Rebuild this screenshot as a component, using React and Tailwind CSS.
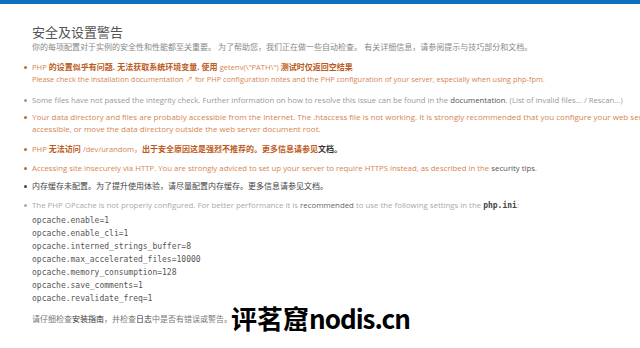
import React from "react";

const sans = { fontFamily: '"Open Sans", "Noto Sans CJK SC", sans-serif' };
const mono = { fontFamily: '"DejaVu Sans Mono", monospace' };

function Dot({ c }) {
  return <span className={`absolute left-[-8px] top-[5px] h-[3px] w-[3px] rounded-full ${c}`} />;
}

function L({ children }) {
  return <span className="text-[7.6px]">{children}</span>;
}

export default function App() {
  const code = [
    "opcache.enable=1",
    "opcache.enable_cli=1",
    "opcache.interned_strings_buffer=8",
    "opcache.max_accelerated_files=10000",
    "opcache.memory_consumption=128",
    "opcache.save_comments=1",
    "opcache.revalidate_freq=1",
  ];
  return (
    <div className="relative h-[348px] w-[640px] overflow-hidden bg-white" style={sans}>
      <div className="h-[4px] w-full bg-[#0b6fc0]" />
      <div className="flex">
        <div className="ml-[14px] mt-[4px] h-[340px] w-[3px] bg-[#e2e2e2]" />
        <div className="ml-[18px] w-[700px] shrink-0 pt-[20px] text-[8px] leading-[12px]">
          <h2 className="text-[13px] leading-[16px] text-[#555]">安全及设置警告</h2>
          <p className="mt-[1px] text-[#888]">
            你的每项配置对于实例的安全性和性能都至关重要。 为了帮助您，我们正在做一些自动检查。 有关详细信息，请参阅提示与技巧部分和文档。
          </p>
          <ul className="mt-[8px] flex flex-col">
            <li className="relative text-[#d5854f]">
              <Dot c="bg-[#c8662a]" />
              <div>
                <L>PHP</L> <b className="font-bold text-[#bb5a20]">的设置似乎有问题. 无法获取系统环境变量. 使用</b> <L>getenv(\"PATH\")</L> <b className="font-bold text-[#bb5a20]">测试时仅返回空结果</b>
              </div>
              <div className="text-[7.4px]">Please check the installation documentation ↗ for PHP configuration notes and the PHP configuration of your server, especially when using php-fpm.</div>
            </li>
            <li className="relative mt-[9px] text-[7.75px] text-[#999]">
              <Dot c="bg-[#999]" />
              Some files have not passed the integrity check. Further information on how to resolve this issue can be found in the <span className="text-[#555]">documentation</span>. (List of invalid files... / Rescan...)
            </li>
            <li className="relative mt-[5px] text-[8px] text-[#d5854f]">
              <Dot c="bg-[#c8662a]" />
              <div className="whitespace-nowrap">Your data directory and files are probably accessible from the Internet. The .htaccess file is not working. It is strongly recommended that you configure your web server so that the data directory is no longer</div>
              <div>accessible, or move the data directory outside the web server document root.</div>
            </li>
            <li className="relative mt-[8px] text-[#d5854f]">
              <Dot c="bg-[#c8662a]" />
              <L>PHP</L> <b className="font-bold text-[#bb5a20]">无法访问</b> <L>/dev/urandom</L>，<b className="font-bold text-[#bb5a20]">出于安全原因这是强烈不推荐的。更多信息请参见</b><b className="font-bold text-[#333]">文档。</b>
            </li>
            <li className="relative mt-[7px] text-[7.8px] text-[#d5854f]">
              <Dot c="bg-[#c8662a]" />
              Accessing site insecurely via HTTP. You are strongly adviced to set up your server to require HTTPS instead, as described in the <span className="text-[#555]">security tips</span>.
            </li>
            <li className="relative mt-[6px] text-[#444]">
              <Dot c="bg-[#444]" />
              内存缓存未配置。为了提升使用体验，请尽量配置内存缓存。更多信息请参见文档。
            </li>
            <li className="relative mt-[7px] text-[7.85px] text-[#aaa]">
              <Dot c="bg-[#aaa]" />
              The PHP OPcache is not properly configured. For better performance it is <span className="text-[#666]">recommended</span> to use the following settings in the <code className="text-[8px] font-bold text-[#444]" style={mono}>php.ini</code>:
              <pre className="mt-[2px] text-[8px] leading-[13px] text-[#555]" style={mono}>
                {code.join("\n")}
              </pre>
            </li>
          </ul>
          <p className="mt-[8px] text-[#777]">
            请仔细检查<span className="text-[#333]">安装指南</span>，并检查<span className="text-[#333]">日志</span>中是否有错误或警告。
          </p>
        </div>
      </div>
      <div
        className="absolute left-[231px] top-[302px] text-[26px] font-bold leading-[32px] text-black"
        style={{ fontFamily: '"Noto Sans CJK SC", sans-serif' }}
      >
        评茗窟<span className="tracking-[-1px]">nodis.cn</span>
      </div>
    </div>
  );
}
